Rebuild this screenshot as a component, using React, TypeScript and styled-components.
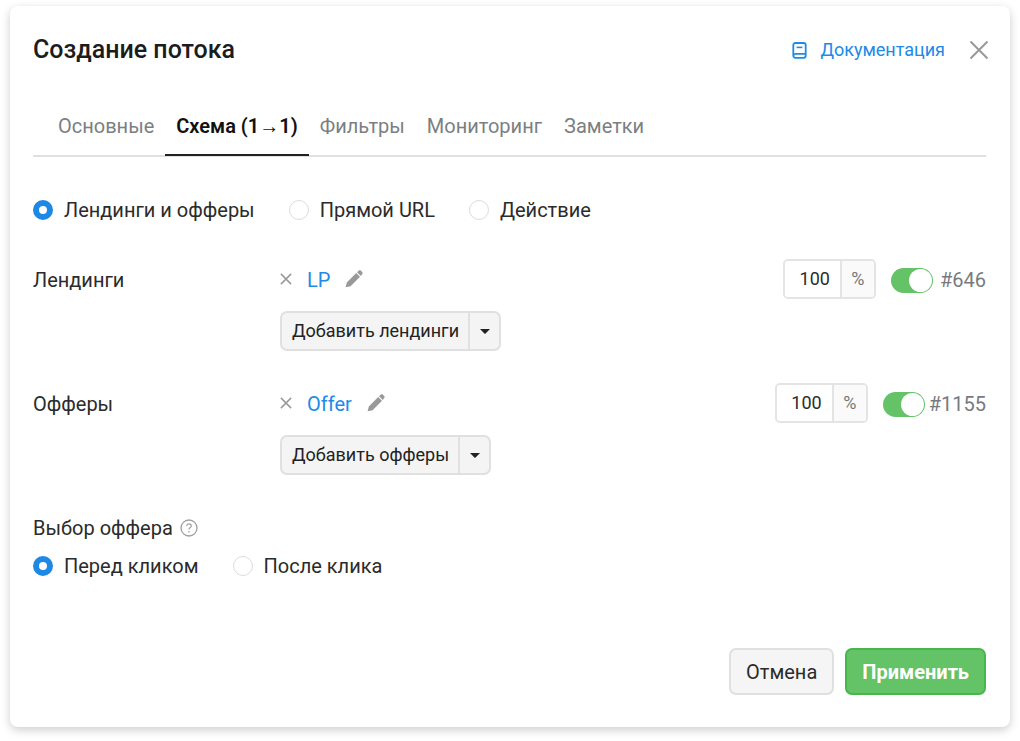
import React, { useState } from 'react';
import styled, { createGlobalStyle } from 'styled-components';

const GlobalStyle = createGlobalStyle`
  *, *::before, *::after { box-sizing: border-box; }
  body {
    margin: 0;
    background: #fff;
    color: #2b2b2b;
    font: 400 20px/24px Roboto, "Liberation Sans", sans-serif;
  }
  button, input { font: inherit; color: inherit; margin: 0; }
`;

const Dialog = styled.main`
  margin: 6px 10px 14px;
  padding: 22px 24px 32px 23px;
  border-radius: 8px;
  background: #fff;
  box-shadow: 0 3px 10px rgba(0, 0, 0, 0.2);
`;

const Header = styled.header`
  display: flex;
  align-items: center;
  justify-content: space-between;
  height: 44px;
`;

const Title = styled.h1`
  margin: 0;
  font-size: 25px;
  line-height: 32px;
  font-weight: 500;
  color: #1c1c1c;
`;

const HeaderActions = styled.div`
  display: flex;
  align-items: center;
  gap: 24px;
`;

const DocLink = styled.a`
  display: flex;
  align-items: center;
  gap: 13px;
  color: #208ae8;
  font-size: 18px;
  text-decoration: none;
`;

const IconButton = styled.button`
  display: flex;
  padding: 0;
  border: 0;
  background: none;
  color: #999;
  cursor: pointer;
`;

const CloseButton = styled(IconButton)`
  margin-right: -3px;
`;

const Tabs = styled.nav`
  display: flex;
  margin-top: 24px;
  padding-left: 14px;
  border-bottom: 2px solid #e0e0e0;
`;

const Tab = styled.button<{ $active: boolean }>`
  height: 60px;
  margin-bottom: -1px;
  padding: 2px 11px 0;
  border: 0;
  border-bottom: 2px solid ${(p) => (p.$active ? '#222' : 'transparent')};
  background: none;
  color: ${(p) => (p.$active ? '#111' : '#7b7f83')};
  font-weight: ${(p) => (p.$active ? 600 : 400)};
  cursor: pointer;
`;

const RadioGroup = styled.div`
  display: flex;
  gap: 34px;
`;

const RadioLabel = styled.label`
  display: flex;
  align-items: center;
  gap: 11px;
  cursor: pointer;
`;

const Radio = styled.input.attrs({ type: 'radio' })`
  appearance: none;
  width: 20px;
  height: 20px;
  border: 1px solid #dcdcdc;
  border-radius: 50%;
  background: #fff;

  &:checked {
    border: 6px solid #1e88e5;
  }
`;

const Form = styled.form`
  display: flex;
  flex-direction: column;
  padding-top: 41px;
`;

const Section = styled.section`
  display: grid;
  grid-template-columns: 247px 1fr;
  margin-top: 32px;
`;

const Sections = styled.div`
  padding-top: 5px;
`;

const SectionName = styled.h2`
  margin: 0;
  font-size: 20px;
  line-height: 42px;
  font-weight: 400;
`;

const Stack = styled.div`
  display: flex;
  flex-direction: column;
  align-items: flex-start;
  gap: 12px;
`;

const ItemRow = styled.div`
  display: flex;
  align-items: center;
  width: 100%;
  height: 40px;
`;

const ItemLink = styled.a`
  margin: 0 15px;
  padding-top: 2px;
  color: #208ae8;
  text-decoration: none;
`;

const Share = styled.label`
  display: flex;
  height: 40px;
  margin-left: auto;
  border: 2px solid #e4e4e4;
  border-radius: 5px;
  overflow: hidden;
`;

const ShareInput = styled.input`
  width: 55px;
  padding: 0 10px 0 0;
  border: 0;
  font-size: 18px;
  text-align: right;
`;

const Percent = styled.span`
  display: grid;
  place-items: center;
  width: 34px;
  border-left: 2px solid #e4e4e4;
  background: #fafafa;
  color: #777;
  font-size: 18px;
`;

const Switch = styled.input.attrs({ type: 'checkbox', role: 'switch' })`
  appearance: none;
  display: flex;
  align-items: center;
  width: 42px;
  height: 25px;
  margin: 2px 0 0 15px;
  padding: 0 1px;
  border-radius: 13px;
  background: #ccc;
  cursor: pointer;

  &::before {
    content: '';
    width: 23px;
    height: 23px;
    border-radius: 50%;
    background: #fff;
  }

  &:checked {
    justify-content: flex-end;
    background: #64c267;
  }
`;

const ItemId = styled.span<{ $gap: number }>`
  margin-left: ${(p) => p.$gap}px;
  padding-top: 2px;
  color: #777b7f;
`;

const SplitButton = styled.div`
  display: flex;
  height: 40px;
  border: 2px solid #e0e0e0;
  border-radius: 7px;
  background: #f4f4f4;
  overflow: hidden;
`;

const SplitMain = styled.button`
  padding: 0 9px 0 10px;
  border: 0;
  background: none;
  color: #222;
  font-size: 18px;
  cursor: pointer;
`;

const SplitToggle = styled.button`
  display: grid;
  place-items: center;
  width: 31px;
  padding: 0;
  border: 0;
  border-left: 2px solid #e0e0e0;
  background: none;
  color: #222;
  cursor: pointer;
`;

const ChoiceTitle = styled.div`
  display: flex;
  align-items: center;
  gap: 7px;
  margin: 41px 0 14px;
`;

const Footer = styled.footer`
  display: flex;
  justify-content: flex-end;
  gap: 11px;
  margin-top: 70px;
`;

const ActionButton = styled.button<{ $primary?: boolean }>`
  height: 47px;
  padding: 0 15px;
  border: 2px solid ${(p) => (p.$primary ? '#46b84b' : '#e0e0e0')};
  border-radius: 7px;
  background: ${(p) => (p.$primary ? '#64c267' : '#f5f5f5')};
  color: ${(p) => (p.$primary ? '#fff' : '#2b2b2b')};
  font-weight: ${(p) => (p.$primary ? 700 : 400)};
  cursor: pointer;
`;

const Cross = ({ size, stroke }: { size: number; stroke: number }) => (
  <svg width={size} height={size} viewBox="0 0 20 20" fill="none" stroke="currentColor" strokeWidth={stroke}>
    <path d="M1.5 1.5 18.5 18.5M18.5 1.5 1.5 18.5" />
  </svg>
);

const Book = () => (
  <svg width="15" height="17" viewBox="0 0 15 17" fill="none" stroke="currentColor" strokeWidth="1.8">
    <rect x="1.3" y="1" width="12.4" height="14.8" rx="2" />
    <path d="M1.6 13.4C1.8 12.4 2.6 11.9 3.6 11.9H13.5" />
    <path d="M4.6 5.4H10.4" strokeWidth="1.6" />
  </svg>
);

const Pencil = () => (
  <svg width="18" height="18" viewBox="0 0 18 18" fill="currentColor">
    <path d="M.6 17.2 1.8 12.4 11.2 3 15 6.8 5.6 16.2ZM12 2.2 13.6.8C14.3.2 15.3.2 16 .8L17.1 2C17.8 2.7 17.8 3.6 17.1 4.3L15.8 5.9Z" />
  </svg>
);

const Caret = () => (
  <svg width="10" height="5" viewBox="0 0 10 5" fill="currentColor">
    <path d="M0 0H10L5.6 4.6Q5 5 4.4 4.6Z" />
  </svg>
);

const Help = () => (
  <svg width="18" height="18" viewBox="0 0 18 18" fill="none" stroke="#a0a0a0">
    <circle cx="9" cy="9" r="8" strokeWidth="1.3" />
    <path d="M6.7 7.1C6.7 5.6 7.7 4.8 9 4.8S11.3 5.6 11.3 6.9C11.3 8.4 9 8.6 9 10.5M9 12V13.4" strokeWidth="1.2" />
  </svg>
);

interface ItemSectionProps {
  name: string;
  item: string;
  id: string;
  idGap: number;
  addText: string;
}

const ItemSection = ({ name, item, id, idGap, addText }: ItemSectionProps) => (
  <Section>
    <SectionName>{name}</SectionName>
    <Stack>
      <ItemRow>
        <IconButton type="button" aria-label={`Удалить ${item}`}>
          <Cross size={12} stroke={2.5} />
        </IconButton>
        <ItemLink href="#">{item}</ItemLink>
        <IconButton type="button" aria-label={`Изменить ${item}`}>
          <Pencil />
        </IconButton>
        <Share>
          <ShareInput defaultValue="100" inputMode="numeric" />
          <Percent>%</Percent>
        </Share>
        <Switch defaultChecked aria-label={item} />
        <ItemId $gap={idGap}>{id}</ItemId>
      </ItemRow>
      <SplitButton>
        <SplitMain type="button">{addText}</SplitMain>
        <SplitToggle type="button" aria-label={`${addText}: меню`}>
          <Caret />
        </SplitToggle>
      </SplitButton>
    </Stack>
  </Section>
);

const Choice = ({ name, options }: { name: string; options: string[] }) => (
  <RadioGroup role="radiogroup">
    {options.map((option, i) => (
      <RadioLabel key={option}>
        <Radio name={name} defaultChecked={i === 0} />
        {option}
      </RadioLabel>
    ))}
  </RadioGroup>
);

const TABS = ['Основные', 'Схема (1→1)', 'Фильтры', 'Мониторинг', 'Заметки'];

export default function App() {
  const [tab, setTab] = useState(1);
  return (
    <>
      <GlobalStyle />
      <Dialog>
        <Header>
          <Title>Создание потока</Title>
          <HeaderActions>
            <DocLink href="#">
              <Book />
              Документация
            </DocLink>
            <CloseButton type="button" aria-label="Закрыть">
              <Cross size={20} stroke={2} />
            </CloseButton>
          </HeaderActions>
        </Header>
        <Tabs>
          {TABS.map((text, i) => (
            <Tab key={text} type="button" $active={i === tab} onClick={() => setTab(i)}>
              {text}
            </Tab>
          ))}
        </Tabs>
        <Form onSubmit={(e) => e.preventDefault()}>
          <Choice name="schema" options={['Лендинги и офферы', 'Прямой URL', 'Действие']} />
          <Sections>
            <ItemSection name="Лендинги" item="LP" id="#646" idGap={7} addText="Добавить лендинги" />
            <ItemSection name="Офферы" item="Offer" id="#1155" idGap={4} addText="Добавить офферы" />
          </Sections>
          <ChoiceTitle>
            Выбор оффера
            <Help />
          </ChoiceTitle>
          <Choice name="offer" options={['Перед кликом', 'После клика']} />
          <Footer>
            <ActionButton type="button">Отмена</ActionButton>
            <ActionButton type="submit" $primary>Применить</ActionButton>
          </Footer>
        </Form>
      </Dialog>
    </>
  );
}
